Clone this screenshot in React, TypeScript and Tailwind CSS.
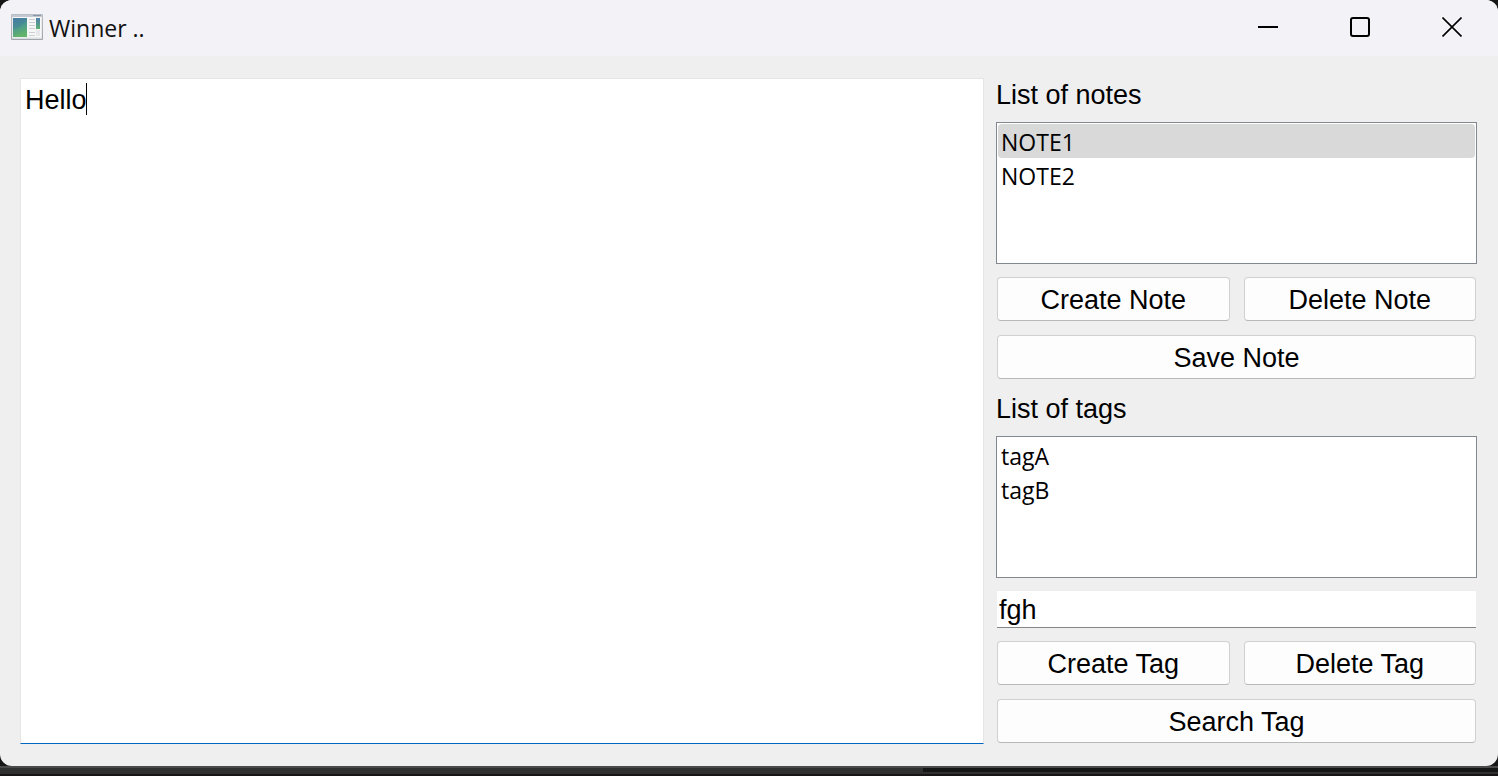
import { useState } from 'react';
import type { ReactNode } from 'react';

function AppIcon() {
  return (
    <svg width="32" height="26" viewBox="0 0 32 26" aria-hidden="true">
      <defs>
        <linearGradient id="pane" x1="0" y1="0" x2="0.3" y2="1">
          <stop offset="0" stopColor="#4b7fa8" />
          <stop offset="0.5" stopColor="#4b9890" />
          <stop offset="1" stopColor="#62b36c" />
        </linearGradient>
        <linearGradient id="strip" x1="0" y1="0" x2="0" y2="1">
          <stop offset="0" stopColor="#4f7fb0" />
          <stop offset="1" stopColor="#5fb070" />
        </linearGradient>
        <linearGradient id="frame" x1="0" y1="0" x2="0" y2="1">
          <stop offset="0" stopColor="#b9bec6" />
          <stop offset="1" stopColor="#a0a5ac" />
        </linearGradient>
      </defs>
      <rect x="0" y="0" width="32" height="26" rx="1" fill="url(#frame)" />
      <rect x="1" y="1" width="30" height="24" fill="#dcdfe3" />
      <rect x="1" y="1" width="30" height="2" fill="#c4c9d1" />
      <rect x="22" y="1" width="8" height="1" fill="#8795a8" />
      <rect x="1.500" y="3" width="29" height="20.500" fill="#f6f7f7" />
      <rect x="2" y="4" width="14" height="19" fill="url(#pane)" />
      <path d="M2 15 Q10 13.500 16 6 V4 H2 Z" fill="#3f6f9a" opacity="0.3" />
      <path d="M18 5.500h6M18 8.500h6M18 11.500h6M18 14.500h6M18 18.500h6M18 21.500h6" stroke="#cdcfd2" />
      <rect x="25" y="4" width="4" height="11" fill="url(#strip)" />
      <rect x="25" y="16" width="4" height="6" fill="#e6e8ea" />
    </svg>
  );
}

function WindowButton({ label, children }: { label: string; children: ReactNode }) {
  return (
    <button type="button" aria-label={label} className="flex h-full w-[92px] items-center justify-center">
      <svg width="20" height="20" viewBox="0 0 20 20" fill="none" stroke="#000" aria-hidden="true">
        {children}
      </svg>
    </button>
  );
}

function TitleBar() {
  return (
    <header className="flex h-14 shrink-0 items-center bg-[#f3f2f7] pb-0.5 pl-[11px]">
      <AppIcon />
      <h1 className="ml-1.5 flex-1 pt-0.5 font-['Open_Sans',sans-serif] text-[23px] leading-8 text-[#111]">
        Winner ..
      </h1>
      <div className="flex h-full">
        <WindowButton label="Minimize">
          <path d="M0 10h20" strokeWidth="2" />
        </WindowButton>
        <WindowButton label="Maximize">
          <rect x="1" y="1" width="18" height="18" rx="2" strokeWidth="2" />
        </WindowButton>
        <WindowButton label="Close">
          <path d="M0.500 0.500l19 19M19.500 0.500l-19 19" strokeWidth="1.600" />
        </WindowButton>
      </div>
    </header>
  );
}

function PushButton({ children }: { children: ReactNode }) {
  return (
    <button
      type="button"
      className="m-px h-11 flex-1 rounded border border-[#d0d0d0] border-b-[#b8b8b8] bg-[#fdfdfd] pt-0.5 text-[27px] leading-8"
    >
      {children}
    </button>
  );
}

function ListBox({ title, items, initial }: { title: string; items: string[]; initial: string | null }) {
  const [selected, setSelected] = useState(initial);
  return (
    <>
      <h2 className="h-8 text-[27px] leading-[34px]">{title}</h2>
      <ul
        aria-label={title}
        className="min-h-24 flex-1 border border-[#828790] bg-white p-px font-['Open_Sans',sans-serif] text-[23px]"
      >
        {items.map((item) => (
          <li key={item}>
            <button
              type="button"
              aria-pressed={item === selected}
              onClick={() => setSelected(item)}
              className={
                item === selected
                  ? 'block h-[34px] w-full rounded-sm bg-[#d9d9d9] px-[3px] pt-0.5 text-left leading-8'
                  : 'block h-[34px] w-full rounded-sm px-[3px] pt-0.5 text-left leading-8'
              }
            >
              {item}
            </button>
          </li>
        ))}
      </ul>
    </>
  );
}

export default function App() {
  return (
    <div className="flex min-h-screen flex-col bg-[#181717] font-['Liberation_Sans',sans-serif] text-black">
      <div className="flex flex-1 flex-col overflow-hidden rounded-xl bg-[#efefef]">
        <TitleBar />
        <main className="grid flex-1 grid-cols-[964fr_481fr] gap-3 pt-[22px] pr-[21px] pb-[22px] pl-5">
          <div className="relative flex">
            <textarea
              aria-label="Note text"
              defaultValue="Hello"
              spellCheck={false}
              className="w-full resize-none border border-[#e5e5e5] border-b-[#0067c0] bg-white px-1 pt-[5px] text-[27px] leading-8 outline-none"
            />
            <span aria-hidden="true" className="absolute top-[5px] left-[66px] h-8 w-px bg-black" />
          </div>
          <div className="flex flex-col gap-3">
            <ListBox title="List of notes" items={['NOTE1', 'NOTE2']} initial="NOTE1" />
            <div className="flex gap-3">
              <PushButton>Create Note</PushButton>
              <PushButton>Delete Note</PushButton>
            </div>
            <div className="flex">
              <PushButton>Save Note</PushButton>
            </div>
            <ListBox title="List of tags" items={['tagA', 'tagB']} initial={null} />
            <input
              type="text"
              aria-label="Tag"
              defaultValue="fgh"
              className="mx-px h-[38px] border-t border-b border-t-[#ececec] border-b-[#868686] bg-white px-0.5 pt-0.5 text-[27px] leading-8 outline-none"
            />
            <div className="flex gap-3">
              <PushButton>Create Tag</PushButton>
              <PushButton>Delete Tag</PushButton>
            </div>
            <div className="flex">
              <PushButton>Search Tag</PushButton>
            </div>
          </div>
        </main>
      </div>
      <div aria-hidden="true" className="flex h-2.5 shrink-0 flex-col">
        <div className="h-0.5 bg-[#4a4a4a]" />
        <div className="flex flex-1">
          <div className="w-[61.6%] bg-[#303030]" />
          <div className="flex-1 border-b-2 border-[#303030] bg-[#151515]" />
        </div>
        <div className="h-0.5 bg-[#171415]" />
      </div>
    </div>
  );
}
